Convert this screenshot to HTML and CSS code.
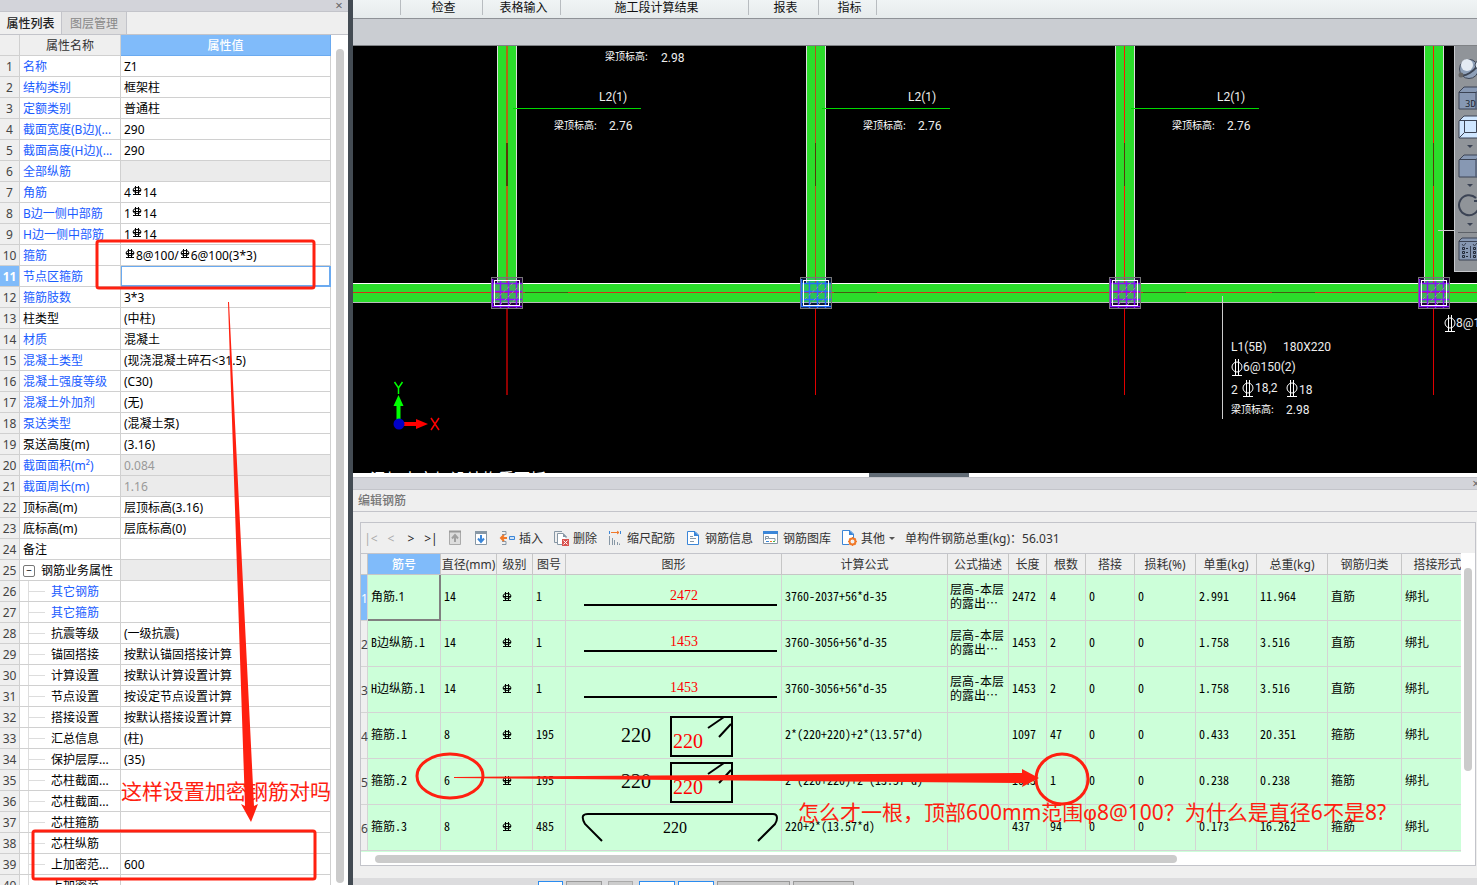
FILE: index.html
```html
<!DOCTYPE html>
<html lang="zh-CN">
<head>
    <meta charset="UTF-8">
    <title>属性列表</title>
    <link rel="stylesheet" href="styles.css">
</head>
<body>
    <!-- shared shapes -->
    <svg class="defs">
        <symbol id="rebar" viewBox="0 0 10 10">
            <ellipse cx="5" cy="4" rx="4" ry="2.5" fill="none" stroke="currentColor"/>
            <path d="M3.500 0v9M6.500 0v9M1 4.500h8M1 8.500h8" fill="none" stroke="currentColor"/>
        </symbol>
        <symbol id="cadbar" viewBox="0 0 12 18">
            <ellipse cx="6" cy="9" rx="5" ry="5" fill="none" stroke="#fff"/>
            <path d="M4.500 1v16M7.500 1v16M1 17.500h10" fill="none" stroke="#fff"/>
        </symbol>
        <symbol id="column" viewBox="0 0 32 32">
            <rect x="0.5" y="0.5" width="31" height="31" fill="currentColor" fill-opacity="0.2" stroke="#777"/>
            <path d="M1 6.500h30M1 14.500h30M1 22.500h30M1 29.500h30M1.500 2v28M9.500 3v28M17.500 3v28M25.500 3v28" stroke="currentColor" stroke-width="1.500" fill="none"/>
            <path d="M5 22L22 6M10 27L28 9M18 28L29 18" stroke="#999" stroke-dasharray="3 2"/>
            <rect x="3.5" y="3.5" width="25" height="25" fill="none" stroke="#fff"/>
        </symbol>
    </svg>

    <div class="left-panel">
        <div class="title-strip"><button class="close">×</button></div>
        <div class="tabs">
            <button class="tab active">属性列表</button>
            <button class="tab">图层管理</button>
        </div>
        <div class="prop-area">
            <table class="props">
                <thead>
                    <tr><th class="num"></th><th class="name">属性名称</th><th class="value">属性值</th></tr>
                </thead>
                <tbody id="props"></tbody>
            </table>
            <div class="v-scroll"></div>
        </div>
    </div>
    <div class="divider"></div>

    <div class="main">
        <div class="ribbon">
            <span class="group g0"></span>
            <span class="group g1">检查</span>
            <span class="group g2">表格输入</span>
            <span class="group g3">施工段计算结果</span>
            <span class="group g4">报表</span>
            <span class="group g5">指标</span>
        </div>
        <div class="strip"></div>

        <div class="canvas">
            <svg class="drawing">
                <!-- vertical beams -->
                <g id="beams"></g>
                <!-- horizontal beam -->
                <rect y="237" width="100%" height="20" fill="#2bdd2b"/>
                <rect y="237" width="100%" height="1" fill="#fff"/>
                <rect y="256" width="100%" height="1" fill="#bbb"/>
                <rect y="246" width="100%" height="1" fill="#d3301a"/>
                <path d="M172 246.500h43M481 246.500h43M790 246.500h43M919 246.500h43" stroke="#4a5a10"/>
                <g id="nodes"></g>

                <text class="cad-cjk" x="252" y="14">梁顶标高:</text>
                <text class="cad" x="308" y="16">2.98</text>

                <path d="M869.500 250v123M1085 184.500h20" stroke="#ccc"/>
                <text class="cad" x="878" y="305">L1(5B)</text>
                <text class="cad" x="930" y="305">180X220</text>
                <use href="#cadbar" x="878" y="312" width="12" height="18"/>
                <text class="cad" x="890" y="325">6@150(2)</text>
                <text class="cad" x="878" y="348">2</text>
                <use href="#cadbar" x="889" y="333" width="12" height="18"/>
                <text class="cad" x="902" y="346">18,2</text>
                <use href="#cadbar" x="933" y="333" width="12" height="18"/>
                <text class="cad" x="946" y="348">18</text>
                <text class="cad-cjk" x="878" y="367">梁顶标高:</text>
                <text class="cad" x="933" y="368">2.98</text>
                <use href="#cadbar" x="1091" y="268" width="12" height="18"/>
                <text class="cad" x="1103" y="281">8@100</text>
                <text class="cad-note" x="17" y="439">混加土定加设结构质面板</text>

                <!-- axes -->
                <path d="M43.500 376v-16h-3l5-11 5 11h-3v16z" fill="#0f0"/>
                <path d="M51 376h12v-3l12 5-12 5v-3h-12z" fill="#f00"/>
                <circle cx="46" cy="378" r="5.500" fill="#0000c8"/>
                <path d="M41.500 336l4 6 4-6M45.500 342v6" stroke="#0f0" stroke-width="1.500" fill="none"/>
                <path d="M78 372l8 12M86 372l-8 12" stroke="#f00" stroke-width="1.500"/>
            </svg>
            <div class="view-tools">
                <button><svg viewBox="0 0 24 24"><circle cx="11" cy="12" r="9.500" fill="#8ea0b8" stroke="#3d4656"/><circle cx="9" cy="8" r="6" fill="#e4ebf3"/><path d="M2 18c6 2 14-4 18-10" fill="none" stroke="#3d4656" stroke-width="2"/><circle cx="3" cy="18" r="2.500" fill="#666"/><circle cx="21" cy="8" r="4" fill="#dde6f0" stroke="#3d4656"/></svg></button>
                <button><svg viewBox="0 0 24 24"><path d="M1 6l5-5h20v22H1z" fill="#8798b3" stroke="#3b4354"/><path d="M1 6.500h17v16M18 6.500l6-5" fill="none" stroke="#3b4354"/><text x="7" y="21" class="cube-text">3D</text></svg></button>
                <button class="with-menu"><svg viewBox="0 0 24 24"><path d="M1 6l5-5h20v22H1z" fill="#cfe6ff" stroke="#3b4354"/><path d="M1 5.500h23M6.500 5v12.500h12V5M1 23l5.500-5.500" fill="none" stroke="#3b4354"/></svg></button>
                <button class="with-menu"><svg viewBox="0 0 24 24"><path d="M1 6l5-5h20v22H1z" fill="#8798b3" stroke="#3b4354"/><path d="M1 5.500h17v17M18 5.500l6-5" fill="none" stroke="#3b4354"/></svg></button>
                <button class="with-menu"><svg viewBox="0 0 24 24"><path d="M18 5A10 10 0 1 0 21 13M21 2v6h-5" fill="none" stroke="#3b4354" stroke-width="2"/></svg></button>
                <hr>
                <button><svg viewBox="0 0 24 24"><path d="M1 4l3-3h22v22H1z" fill="#8798b3" stroke="#3b4354"/><path d="M1 4.500h23M12.500 9v12M4 7l1.500 2L8 6M15 7l1.500 2L19 6" fill="none" stroke="#3b4354"/><path d="M4.500 10.500h2v2h-2zM4.500 14.500h2v2h-2zM4.500 18.500h2v2h-2zM15.500 10.500h2v2h-2zM15.500 14.500h2v2h-2zM15.500 18.500h2v2h-2zM8 11.500h2M8 15.500h2M8 19.500h2M19 11.500h2M19 15.500h2" fill="none" stroke="#222a38"/></svg></button>
            </div>
        </div>

        <div class="splitter"><span class="grip"></span></div>
        <div class="title-strip edge"><button class="close">×</button></div>
        <div class="panel-title">编辑钢筋</div>

        <div class="editor">
            <div class="toolbar">
                <div class="nav">
                    <button class="off">|&lt;</button>
                    <button class="off">&lt;</button>
                    <button>&gt;</button>
                    <button>&gt;|</button>
                </div>
                <button><svg class="icon" viewBox="0 0 16 16"><path d="M2.500 1.500h11v13h-11z" fill="#ddd" stroke="#aaa"/><path d="M2 1.500h12" stroke="#999" stroke-width="2"/><path d="M8 12V6M5 8.500L8 5l3 3.500" fill="none" stroke="#a0a0a0" stroke-width="2"/></svg></button>
                <button><svg class="icon" viewBox="0 0 16 16"><path d="M2.500 1.500h11v13h-11z" fill="#fff" stroke="#8797a5"/><path d="M2 2.500h12" stroke="#8797a5" stroke-width="3"/><path d="M8 5v6M5 8.500L8 12l3-3.500" fill="none" stroke="#3b86d8" stroke-width="2"/></svg></button>
                <button><svg class="icon" viewBox="0 0 16 16"><path d="M3 1.500h4v3H3M3 14.500h4v-3H3" fill="none" stroke="#8797a5"/><path d="M10.500 6.500h5v3h-5z" fill="#cfe2f5" stroke="#3b86d8"/><path d="M2 8h6M5 5L2 8l3 3" fill="none" stroke="#f07828" stroke-width="2"/></svg>插入</button>
                <button><svg class="icon" viewBox="0 0 16 16"><path d="M9 1.500H1.500v11H4" fill="none" stroke="#8797a5"/><path d="M10 14.500H4.500v-11H10l3 3V8" fill="#fff" stroke="#8797a5"/><path d="M10 3v4h4" fill="#8797a5"/><rect x="9" y="9" width="7" height="7" fill="#d9534f"/><path d="M10.500 10.500l4 4M14.500 10.500l-4 4" stroke="#fff"/></svg>删除</button>
                <button><svg class="icon" viewBox="0 0 16 16"><path d="M2.500 1v3M13.500 1v3" stroke="#3b86d8"/><path d="M4 2.500h8M10 1l2 1.500L10 4" fill="none" stroke="#f07828"/><path d="M2.500 6v9M5.500 8v7M7.500 10v5M10.500 12v3M12.500 13.500V15" stroke="#8797a5"/></svg>缩尺配筋</button>
                <button><svg class="icon" viewBox="0 0 16 16"><path d="M2.500 1.500H10l3.500 3.500v9.500h-11z" fill="#fff" stroke="#3b86d8"/><path d="M9 1v5h5z" fill="#3b86d8"/><path d="M5 6.500h3M5 8.500h6M5 11.500h4" stroke="#8797a5"/></svg>钢筋信息</button>
                <button><svg class="icon" viewBox="0 0 16 16"><path d="M0.500 1.500h14v12h-14z" fill="#fff" stroke="#8797a5"/><path d="M0 2.500h15" stroke="#3b86d8" stroke-width="3"/><path d="M2.500 10V6.500h3v2H12V11M2 8.500h3" fill="none" stroke="#8797a5"/><path d="M3 11.500h3" stroke="#3b86d8"/><path d="M7 11.500h2" stroke="#f07828"/><path d="M10 11.500h2" stroke="#4b4"/></svg>钢筋图库</button>
                <button class="more"><svg class="icon" viewBox="0 0 16 16"><path d="M8 14.500H1.500v-14H9l3.500 3.500v4" fill="#fff" stroke="#3b86d8"/><path d="M8 0v5h5z" fill="#3b86d8"/><circle cx="11.500" cy="11.500" r="3" fill="none" stroke="#f07828" stroke-width="2"/><path d="M11.500 7v2M11.500 14v2M7 11.500h2M14 11.500h2M8.500 8.500l1 1M14.500 14.500l-1-1M8.500 14.500l1-1M14.500 8.500l-1 1" stroke="#f07828"/></svg>其他<span class="caret"></span></button>
                <span>单构件钢筋总重(kg)：56.031</span>
            </div>
            <div class="grid-area">
                <div class="grid-clip">
                    <table class="rebars">
                        <colgroup>
                            <col class="c-num"><col class="c-id"><col class="c-dia"><col class="c-grade"><col class="c-fig">
                            <col class="c-shape"><col class="c-formula"><col class="c-weight"><col class="c-len"><col class="c-count">
                            <col class="c-lap"><col class="c-weight"><col class="c-weight"><col class="c-total"><col class="c-kind"><col class="c-form">
                        </colgroup>
                        <thead>
                            <tr>
                                <th></th><th class="sel">筋号</th><th>直径(mm)</th><th>级别</th><th>图号</th>
                                <th>图形</th><th>计算公式</th><th>公式描述</th><th>长度</th><th>根数</th>
                                <th>搭接</th><th>损耗(%)</th><th>单重(kg)</th><th>总重(kg)</th><th>钢筋归类</th><th>搭接形式</th>
                            </tr>
                        </thead>
                        <tbody id="rebars"></tbody>
                    </table>
                </div>
                <div class="grid-vscroll"></div>
            </div>
            <div class="h-scroll"></div>
        </div>

        <div class="status">
            <button class="on w1"></button><button class="w2"></button><button class="w1 dim"></button>
            <button class="on w2"></button><button class="on w2"></button><button class="w4"></button><button class="w3"></button>
        </div>
    </div>

    <!-- red mark-up over the window -->
    <svg class="markup">
        <rect x="97" y="241" width="217" height="47" rx="2"/>
        <rect x="33" y="831" width="282" height="48" rx="2"/>
        <ellipse cx="450" cy="776" rx="33" ry="22"/>
        <ellipse cx="1062" cy="779" rx="26" ry="25"/>
        <path class="solid" d="M228 302h1l25 504 4-2-7 18-10-18 4 2z"/>
        <path class="solid" d="M454 777l568-4v-4l17 9-17 9 1-4-569-5z"/>
        <text x="121" y="799">这样设置加密钢筋对吗</text>
        <text x="798" y="820">怎么才一根，顶部600mm范围<tspan class="phi">φ</tspan>8@100？为什么是直径6不是8?</text>
    </svg>

    <script>
        const bar = '<svg class="bar"><use href="#rebar"/></svg>';

        // name, value, flags: b = blue name, g = grey cell, t = tree child, h = tree head, i = edit cell
        const props = [
            ['名称', 'Z1', 'b'],
            ['结构类别', '框架柱', 'b'],
            ['定额类别', '普通柱', 'b'],
            ['截面宽度(B边)(...', '290', 'b'],
            ['截面高度(H边)(...', '290', 'b'],
            ['全部纵筋', '', 'bg'],
            ['角筋', '4' + bar + '14', 'b'],
            ['B边一侧中部筋', '1' + bar + '14', 'b'],
            ['H边一侧中部筋', '1' + bar + '14', 'b'],
            ['箍筋', bar + '8@100/' + bar + '6@100(3*3)', 'b'],
            ['节点区箍筋', '', 'bi'],
            ['箍筋肢数', '3*3', 'b'],
            ['柱类型', '(中柱)', ''],
            ['材质', '混凝土', 'b'],
            ['混凝土类型', '(现浇混凝土碎石&lt;31.5)', 'b'],
            ['混凝土强度等级', '(C30)', 'b'],
            ['混凝土外加剂', '(无)', 'b'],
            ['泵送类型', '(混凝土泵)', 'b'],
            ['泵送高度(m)', '(3.16)', ''],
            ['截面面积(m²)', '0.084', 'bg'],
            ['截面周长(m)', '1.16', 'bg'],
            ['顶标高(m)', '层顶标高(3.16)', ''],
            ['底标高(m)', '层底标高(0)', ''],
            ['备注', '', ''],
            ['钢筋业务属性', '', 'gh'],
            ['其它钢筋', '', 'bt'],
            ['其它箍筋', '', 'bt'],
            ['抗震等级', '(一级抗震)', 't'],
            ['锚固搭接', '按默认锚固搭接计算', 't'],
            ['计算设置', '按默认计算设置计算', 't'],
            ['节点设置', '按设定节点设置计算', 't'],
            ['搭接设置', '按默认搭接设置计算', 't'],
            ['汇总信息', '(柱)', 't'],
            ['保护层厚...', '(35)', 't'],
            ['芯柱截面...', '', 't'],
            ['芯柱截面...', '', 't'],
            ['芯柱箍筋', '', 't'],
            ['芯柱纵筋', '', 't'],
            ['上加密范...', '600', 't'],
            ['上加密范...', '', 't']
        ];

        const propBody = document.getElementById('props');
        props.forEach((p, i) => {
            const row = document.createElement('tr');
            const f = p[2];
            let name = p[0];
            if (f.includes('h')) name = '<button class="fold">−</button>' + name;
            let value = p[1];
            if (f.includes('i')) value = '<input class="edit" type="text" aria-label="节点区箍筋">';
            row.innerHTML = `
                <td class="num${f.includes('i') ? ' current' : ''}">${i + 1}</td>
                <td class="name${f.includes('b') ? ' blue' : ''}${f.includes('t') ? ' child' : ''}">${name}</td>
                <td class="value${f.includes('g') ? ' grey' : ''}${f.includes('i') ? ' editing' : ''}">${value}</td>
            `;
            propBody.appendChild(row);
        });

        function straight(n) {
            return `<svg class="shape"><path d="M18 30h193"/><text class="red mid" x="118" y="25">${n}</text></svg>`;
        }
        const stirrup = '<svg class="shape"><text class="big" x="55" y="29">220</text><rect x="105" y="4" width="61" height="39"/><text class="big red" x="107" y="35">220</text><path d="M142 15L158 4M153 24L165 11"/></svg>';
        const tie = '<svg class="shape"><path d="M36 36L19 19Q16 14 17 11Q18 9 22 9H207Q211 9 211 13Q211 16 209 19L192 36"/><text class="tie" x="109" y="28">220</text></svg>';

        const desc = '层高-本层<br>的露出…';
        const rebars = [
            ['角筋.1', 14, 1, straight(2472), '3760-2037+56*d-35', desc, 2472, 4, '2.991', '11.964', '直筋'],
            ['B边纵筋.1', 14, 1, straight(1453), '3760-3056+56*d-35', desc, 1453, 2, '1.758', '3.516', '直筋'],
            ['H边纵筋.1', 14, 1, straight(1453), '3760-3056+56*d-35', desc, 1453, 2, '1.758', '3.516', '直筋'],
            ['箍筋.1', 8, 195, stirrup, '2*(220+220)+2*(13.57*d)', '', 1097, 47, '0.433', '20.351', '箍筋'],
            ['箍筋.2', 6, 195, stirrup, '2*(220+220)+2*(13.57*d)', '', 1043, 1, '0.238', '0.238', '箍筋'],
            ['箍筋.3', 8, 485, tie, '220+2*(13.57*d)', '', 437, 94, '0.173', '16.262', '箍筋']
        ];
        const rebarBody = document.getElementById('rebars');
        rebars.forEach((r, i) => {
            const row = document.createElement('tr');
            row.innerHTML = `
                <td class="idx${i == 0 ? ' current' : ''}">${i + 1}</td>
                <td class="${i == 0 ? 'focus' : ''}">${r[0]}</td>
                <td>${r[1]}</td>
                <td class="grade">${bar}</td>
                <td>${r[2]}</td>
                <td class="fig">${r[3]}</td>
                <td>${r[4]}</td>
                <td class="desc">${r[5]}</td>
                <td>${r[6]}</td>
                <td>${r[7]}</td>
                <td>0</td>
                <td>0</td>
                <td>${r[8]}</td>
                <td>${r[9]}</td>
                <td>${r[10]}</td>
                <td>绑扎</td>
            `;
            rebarBody.appendChild(row);
        });

        // beams and columns stand 309 apart
        let beams = '', nodes = '';
        for (let i = 0; i < 4; i++) {
            const x = 144 + i * 309;
            const mid = i == 0 ? x + 10 : x + 9.5;
            const wide = i == 0 ? 2 : 1;
            const axis = i == 0 ? '#b06a14' : (i == 1 ? '#b8501a' : '#ff1a00');
            const tail = i == 0 ? '#900000' : '#e00000';
            beams += `<rect x="${x}" width="20" height="237" fill="#2bdd2b"/>
                <path d="M${x + 0.5} 0v237M${x + 19.5} 0v237" stroke="#ddd"/>
                <path d="M${mid} 0v237" stroke="${axis}" stroke-width="${wide}"/>
                <path d="M${mid} 97v43" stroke="#5a3a08" stroke-width="${wide}"/>`;
            if (i < 3) {
                beams += `<path d="M${x + 16} 62.500h128" stroke="#00d800"/>
                    <text class="cad" x="${x + 102}" y="55">L2(1)</text>
                    <text class="cad-cjk" x="${x + 57}" y="83">梁顶标高:</text>
                    <text class="cad" x="${x + 112}" y="84">2.76</text>`;
            }
            nodes += `<path d="M${mid} 262v87" stroke="${tail}" stroke-width="${wide}"/>
                <use href="#column" class="${i == 1 ? 'picked' : 'node'}" x="${x - 6}" y="231" width="32" height="32"/>`;
        }
        document.getElementById('beams').innerHTML = beams;
        document.getElementById('nodes').innerHTML = nodes;
    </script>
</body>
</html>
```

FILE: styles.css
```css
body {
    margin: 0;
    height: 100vh;
    overflow: hidden;
    display: flex;
    position: relative;
    background-color: #efefef;
    font-family: "Noto Sans", "Noto Sans CJK SC", sans-serif;
    font-size: 12px;
    color: #333;
}

button {
    font: inherit;
    color: inherit;
    background: none;
    border: none;
    padding: 0;
}

.defs {
    position: absolute;
    width: 0;
    height: 0;
}

/* left panel */
.left-panel {
    width: 348px;
    flex: none;
    display: flex;
    flex-direction: column;
    background-color: #efefef;
}

.title-strip {
    height: 11px;
    flex: none;
    background-color: #d3d4da;
    border-bottom: 1px solid #c3c4ca;
    display: flex;
    justify-content: flex-end;
}

.title-strip.edge {
    margin-right: -8px;
}

.close {
    width: 18px;
    line-height: 11px;
    font-size: 13px;
    color: #666;
}

.tabs {
    display: flex;
    height: 22px;
    border-bottom: 1px solid #c3c4ca;
}

.tab {
    width: 65px;
    padding-top: 2px;
    line-height: 20px;
    background-color: #dfdfe0;
    color: #888;
    border-right: 1px solid #c3c4ca;
}

.tab.active {
    width: 62px;
    background-color: #efefef;
    color: #222;
    font-weight: 500;
}

.prop-area {
    flex: 1;
    min-height: 0;
    overflow: hidden;
    display: flex;
    background-color: #fff;
}

table {
    border-collapse: separate;
    border-spacing: 0;
    table-layout: fixed;
}

.props {
    width: 331px;
    height: max-content;
}

.props th,
.props td {
    height: 18px;
    line-height: 18px;
    padding: 2px 0 0;
    border-right: 1px solid #d0d0d0;
    border-bottom: 1px solid #d0d0d0;
    font-weight: normal;
    white-space: nowrap;
    color: #000;
}

.props th {
    background-color: #efefef;
    color: #333;
}

.props th.value {
    background-color: #80bbfa;
    color: #fff;
    border-color: #6aaaf0;
    font-weight: 500;
}

.props .num {
    width: 19px;
    background-color: #efefef;
    color: #444;
    text-align: center;
}

.props .num.current {
    background-color: #80bbfa;
    color: #fff;
    font-weight: bold;
}

.props .name {
    width: 100px;
}

.props td.name,
.props td.value {
    padding-left: 3px;
}

.props td.name {
    width: 97px;
}

.props td.blue {
    color: #1a5cff;
}

.props td.child {
    padding-left: 31px;
    background: linear-gradient(#ddd, #ddd) 8px 0 / 1px 100% no-repeat, linear-gradient(#ddd, #ddd) 8px 10px / 17px 1px no-repeat;
}

.props td.grey {
    background-color: #ebebeb;
    color: #999;
}

.props td.editing {
    padding: 0;
    border-color: #6aaaf0;
}

.edit {
    display: block;
    box-sizing: border-box;
    width: 100%;
    height: 20px;
    border: 1px solid #6aaaf0;
    outline: none;
    background: #fff;
}

.fold {
    width: 12px;
    height: 12px;
    margin-right: 6px;
    border: 1px solid #777;
    border-radius: 2px;
    line-height: 9px;
    font-size: 10px;
    background-color: #fff;
    vertical-align: 1px;
}

.bar {
    width: 10px;
    height: 10px;
    margin: 0 1px;
    vertical-align: 1px;
}

.v-scroll {
    width: 8px;
    margin: 14px 0 2px 5px;
    border-radius: 4px;
    background-color: #cbcbcb;
}

.divider {
    width: 5px;
    flex: none;
    background-color: #434b53;
}

/* right side */
.main {
    flex: 1;
    min-width: 0;
    display: flex;
    flex-direction: column;
}

.ribbon {
    height: 18px;
    flex: none;
    display: flex;
    border-bottom: 1px solid #8f9297;
    background: linear-gradient(#f0f4f5, #e6ebec);
    color: #111;
}

.group {
    box-sizing: border-box;
    height: 15px;
    line-height: 15px;
    padding-left: 4px;
    border-right: 1px solid #b8bcc0;
    text-align: center;
}

.g0 { width: 48px; }
.g1 { width: 82px; }
.g2 { width: 78px; }
.g3 { width: 188px; }
.g4 { width: 70px; }
.g5 { width: 58px; }

.strip {
    height: 26px;
    flex: none;
    background-color: #cacdd2;
    border-bottom: 1px solid #7f8286;
}

.canvas {
    flex: 1;
    min-height: 0;
    position: relative;
    overflow: hidden;
    background-color: #000;
}

.drawing {
    display: block;
    width: 100%;
    height: 100%;
}

.node {
    color: #8a10ff;
}

.picked {
    color: #2a6cff;
}

.cad {
    font-family: Roboto, sans-serif;
    font-size: 12px;
    fill: #eee;
}

.cad-cjk {
    font-family: "Noto Sans CJK SC", sans-serif;
    font-size: 10px;
    fill: #fff;
}

.cad-note {
    font-family: "Noto Sans CJK SC", sans-serif;
    font-size: 16px;
    fill: #fff;
}

.view-tools {
    position: absolute;
    top: 0;
    right: 0;
    width: 23px;
    box-sizing: border-box;
    padding: 11px 0 10px 3px;
    overflow: hidden;
    background-color: #909499;
    border-left: 1px solid #c8cace;
    border-bottom: 1px solid #c8cace;
}

.view-tools button {
    display: block;
    height: 24px;
    margin-bottom: 5px;
}

.view-tools button:last-child {
    margin-bottom: 0;
}

.view-tools svg {
    display: block;
    width: 24px;
    height: 24px;
}

.view-tools .with-menu {
    height: 34px;
}

.with-menu::after {
    content: "";
    display: block;
    width: 0;
    margin: 6px 0 0 9px;
    border: 3px solid transparent;
    border-top-color: #3b4354;
}

.view-tools hr {
    margin: 0 0 4px;
    border: none;
    border-top: 1px solid #5d6168;
}

.cube-text {
    font: 9px "DejaVu Sans Mono", monospace;
    fill: #222a38;
}

.splitter {
    height: 4px;
    flex: none;
    display: flex;
    justify-content: center;
    padding-left: 8px;
    background-color: #fff;
    border-bottom: 1px solid #c3c4ca;
}

.grip {
    width: 100px;
    background-color: #626c76;
}

.panel-title {
    height: 21px;
    flex: none;
    line-height: 21px;
    padding-left: 5px;
    color: #777;
    font-weight: 500;
    border-bottom: 1px solid #c3c4ca;
}

.editor {
    margin: 10px 1px 12px 7px;
    border: 1px solid #c3c4ca;
    flex: none;
}

.toolbar {
    height: 30px;
    display: flex;
    align-items: center;
    gap: 10px;
}

.toolbar button {
    display: flex;
    align-items: center;
    gap: 4px;
    white-space: nowrap;
}

.nav {
    display: flex;
    margin-right: -4px;
}

.toolbar .nav button {
    width: 20px;
    justify-content: center;
    color: #222;
}

.toolbar .nav .off {
    color: #aaa;
}

.icon {
    width: 16px;
    height: 16px;
}

.caret {
    border: 3px solid transparent;
    border-top-color: #555;
    border-bottom: none;
}

.grid-area {
    display: flex;
    height: 299px;
    background-color: #fff;
}

.grid-clip {
    flex: 1;
    min-width: 0;
    overflow: hidden;
    background-color: #ccffd9;
    border-top: 1px solid #c3c4ca;
}

.rebars {
    width: 1113px;
}

.c-num { width: 7px; }
.c-id { width: 73px; }
.c-dia { width: 56px; }
.c-grade { width: 36px; }
.c-fig { width: 33px; }
.c-shape { width: 216px; }
.c-formula { width: 166px; }
.c-len { width: 38px; }
.c-count { width: 39px; }
.c-lap { width: 49px; }
.c-weight { width: 61px; }
.c-total { width: 71px; }
.c-kind { width: 74px; }
.c-form { width: 72px; }

.rebars th {
    box-sizing: border-box;
    height: 21px;
    line-height: 18px;
    padding: 2px 0 0;
    font-weight: normal;
    white-space: nowrap;
    background-color: #efefef;
    border-right: 1px solid #c6c6c6;
    border-bottom: 1px solid #c6c6c6;
}

.rebars th.sel {
    background-color: #80bbfa;
    color: #fff;
    font-weight: 500;
}

.rebars td {
    box-sizing: border-box;
    height: 46px;
    padding: 0 0 4px 3px;
    line-height: 14px;
    font-family: "Noto Sans Mono CJK SC", "DejaVu Sans Mono", monospace;
    color: #000;
    white-space: nowrap;
    border-right: 1px solid #d4d4d4;
    border-bottom: 1px solid #d4d4d4;
}

.rebars td.idx {
    padding: 2px 0 0;
    background-color: #efefef;
    font-family: "Noto Sans", sans-serif;
    color: #444;
}

.rebars td.idx.current {
    background-color: #80bbfa;
    color: #fff;
}

.rebars td.focus {
    padding-bottom: 0;
    font-family: "Noto Sans", "Noto Sans CJK SC", sans-serif;
    border-right: 2px solid #808080;
    border-bottom: 2px solid #808080;
}

.rebars td.grade {
    padding: 0 0 0 4px;
}

.rebars td.desc {
    padding-left: 2px;
}

.rebars td.fig {
    padding: 0;
}

.shape {
    display: block;
    width: 215px;
    height: 45px;
    fill: none;
    stroke: #000;
    stroke-width: 2;
}

.shape text {
    font-family: "Liberation Serif", serif;
    fill: #000;
    stroke: none;
}

.shape .red {
    fill: #f00;
}

.shape .mid {
    font-size: 14px;
    text-anchor: middle;
}

.shape .big {
    font-size: 20px;
}

.shape .tie {
    font-size: 16px;
    text-anchor: middle;
}

.grid-vscroll {
    width: 8px;
    height: 203px;
    margin: 15px 3px 0;
    border-radius: 4px;
    background-color: #cbcbcb;
}

.h-scroll {
    height: 13px;
    background-color: #fff;
}

.h-scroll::before {
    content: "";
    display: block;
    width: 72%;
    height: 8px;
    margin-left: 14px;
    position: relative;
    top: 3px;
    border-radius: 4px;
    background-color: #cbcbcb;
}

.status {
    height: 7px;
    flex: none;
    overflow: hidden;
    display: flex;
    gap: 3px;
    padding-left: 185px;
    background-color: #dcdcde;
}

.status button {
    box-sizing: border-box;
    height: 20px;
    margin-top: 3px;
    border: 1px solid #999;
    background-color: #ccc;
}

.status .dim {
    margin-left: 3px;
    margin-right: 3px;
    border-color: #aaa;
}

.status .on {
    border-color: #2a8cf0;
    background-color: #fff;
}

.status .w1 { width: 25px; }
.status .w2 { width: 36px; }
.status .w3 { width: 61px; }
.status .w4 { width: 73px; }

/* mark-up */
.markup {
    position: absolute;
    top: 0;
    left: 0;
    width: 100%;
    height: 100%;
    pointer-events: none;
    fill: none;
    stroke: #ff2010;
    stroke-width: 3;
}

.markup .solid {
    fill: #ff2010;
    stroke: none;
}

.markup text {
    font-size: 21px;
    fill: #ff2010;
    stroke: none;
}

.markup .phi {
    font-family: "Liberation Sans", sans-serif;
}
```
